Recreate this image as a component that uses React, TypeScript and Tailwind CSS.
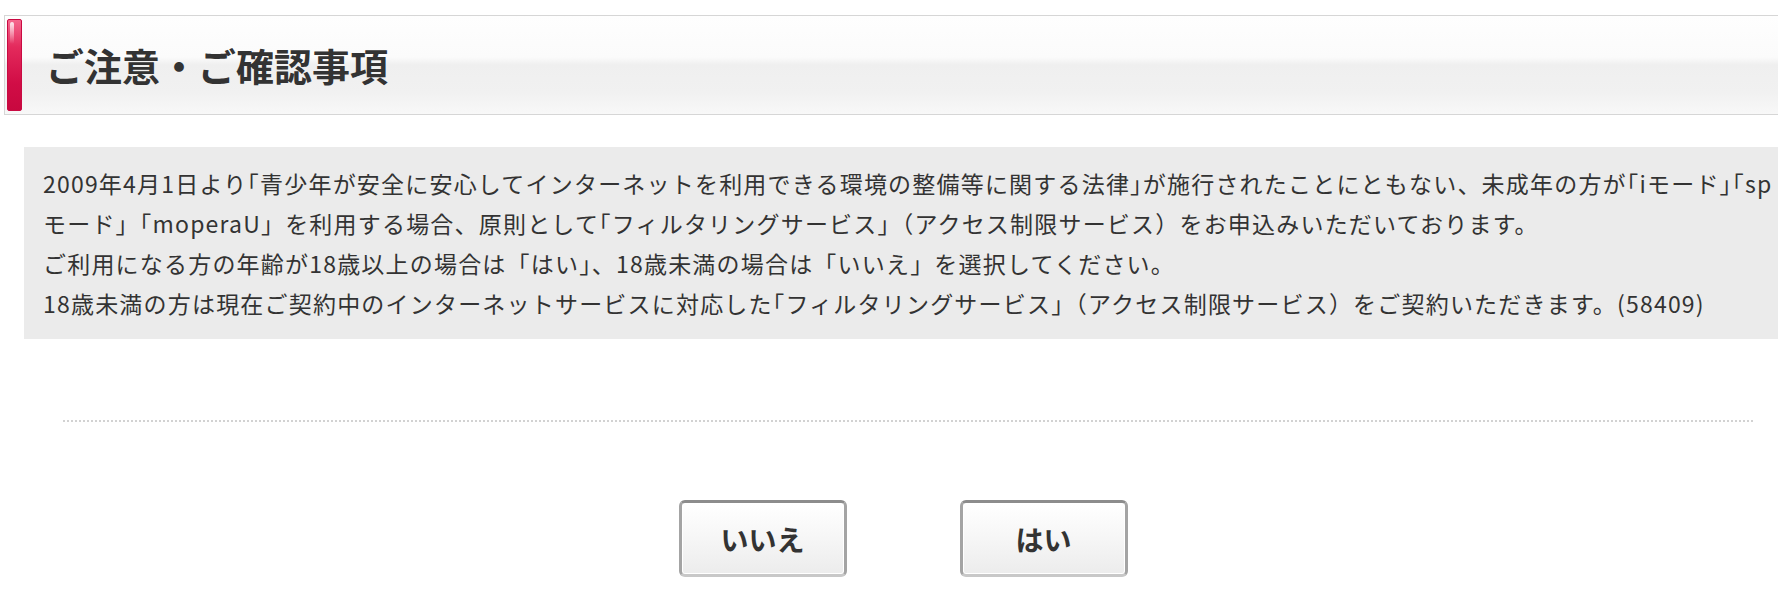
export default function App() {
  return (
    <div className="min-h-[595px] overflow-hidden bg-white font-['Noto_Sans_CJK_JP',sans-serif] text-[#333]">
      <div className="pt-[15px] pl-[4px]">
        <div className="flex h-[100px] items-stretch border border-r-0 border-[#d6d6d6] bg-[linear-gradient(to_bottom,#fefefe_0%,#fbfbfb_42%,#efefef_50%,#f1f1f1_78%,#f8f8f8_100%)] py-[3px] pl-[2px]">
          <div className="relative w-[15px] rounded-[2px] border border-[#c90a42] bg-[linear-gradient(to_bottom,#f5678d_0%,#e32a5c_30%,#d10d46_70%,#c8083f_100%)]">
            <div className="absolute left-[2px] top-[2px] h-[22px] w-[4px] rounded-full bg-[linear-gradient(to_bottom,rgba(255,255,255,0.85),rgba(255,255,255,0))]" />
          </div>
          <h1 className="ml-[24px] self-center text-[38px] font-bold leading-none text-[#333]">
            ご注意・ご確認事項
          </h1>
        </div>
      </div>

      <div className="ml-[24px] mt-[32px] whitespace-nowrap bg-[#ebebeb] py-[16px] pl-[19px] text-[23px] leading-[40px] tracking-[1.2px] text-[#333]">
        <p>
          2009年4月1日より｢青少年が安全に安心してインターネットを利用できる環境の整備等に関する法律｣が施行されたことにともない、未成年の方が｢iモード｣｢sp
          <br />
          モード」「moperaU」を利用する場合、原則として｢フィルタリングサービス」（アクセス制限サービス）をお申込みいただいております。
          <br />
          ご利用になる方の年齢が18歳以上の場合は「はい」、18歳未満の場合は「いいえ」を選択してください。
          <br />
          18歳未満の方は現在ご契約中のインターネットサービスに対応した｢フィルタリングサービス」（アクセス制限サービス）をご契約いただきます。(58409)
        </p>
      </div>

      <div className="ml-[63px] mt-[81px] h-[2px] w-[1692px] bg-[repeating-linear-gradient(to_right,#d2d2d2_0px,#d2d2d2_2px,transparent_2px,transparent_4px)]" />

      <div className="mt-[78px] flex justify-center gap-[113px] pl-[28px]">
        <button className="flex h-[77px] w-[168px] items-center justify-center rounded-[6px] border-[3px] border-b-[#c8c8c8] border-l-[#a4a4a4] border-r-[#a4a4a4] border-t-[#8c8c8c] bg-[linear-gradient(to_bottom,#ffffff_0%,#f7f7f7_45%,#ececec_100%)] text-[28px] font-bold text-[#333] shadow-[inset_0_0_0_1px_#ffffff]">
          いいえ
        </button>
        <button className="flex h-[77px] w-[168px] items-center justify-center rounded-[6px] border-[3px] border-b-[#c8c8c8] border-l-[#a4a4a4] border-r-[#a4a4a4] border-t-[#8c8c8c] bg-[linear-gradient(to_bottom,#ffffff_0%,#f7f7f7_45%,#ececec_100%)] text-[28px] font-bold text-[#333] shadow-[inset_0_0_0_1px_#ffffff]">
          はい
        </button>
      </div>
    </div>
  );
}
